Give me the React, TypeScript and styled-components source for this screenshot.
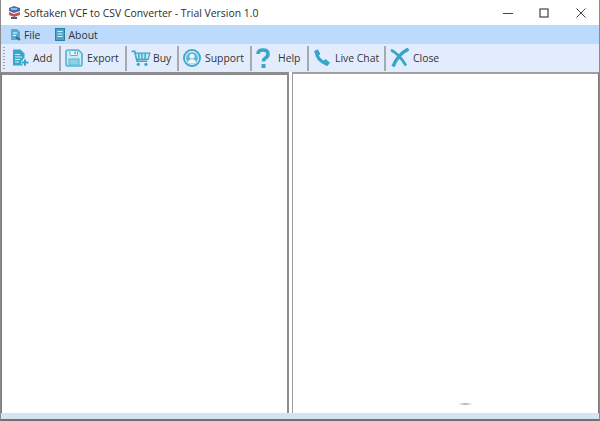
import React from 'react'
import styled, { createGlobalStyle } from 'styled-components'

const Global = createGlobalStyle`
  html, body { margin: 0; padding: 0; background: #fff; overflow: hidden; }
  * { box-sizing: border-box; }
`

const Win = styled.div`
  width: 600px;
  height: 421px;
  display: flex;
  flex-direction: column;
  font-family: "Open Sans", "Noto Sans", sans-serif;
  font-size: 10.4px;
  color: #333;
  border-left: 1px solid #8a8a8a;
  border-right: 1px solid #8a8a8a;
  border-bottom: 2px solid #707070;
  background: #fff;
`

const TitleBar = styled.div`
  height: 25px;
  display: flex;
  align-items: center;
  padding-left: 7px;
  gap: 3px;
  background: #fff;
`

const TitleText = styled.span`
  flex: 1;
  white-space: nowrap;
  color: #2c2c2c;
`

const WinBtns = styled.div`
  display: flex;
  align-items: center;
  margin-right: 12px;
  gap: 26px;
`

const MenuBar = styled.div`
  height: 19px;
  display: flex;
  align-items: center;
  padding-left: 9px;
  gap: 15px;
  background: #bcdafc;
`

const MenuItem = styled.div`
  display: flex;
  align-items: center;
  gap: 3px;
  color: #333;
`

const ToolBar = styled.div`
  height: 28px;
  display: flex;
  align-items: center;
  padding-left: 2px;
  background: #e3ecfd;
`

const Grip = styled.div`
  width: 2px;
  height: 22px;
  margin-right: 7px;
  background: repeating-linear-gradient(to bottom, #9aa4b4 0 1px, transparent 1px 3px);
`

const Tool = styled.div<{ $w: number; $gap: number }>`
  width: ${p => p.$w}px;
  height: 26px;
  display: flex;
  align-items: center;
  gap: ${p => p.$gap}px;
  white-space: nowrap;
`

const Sep = styled.div`
  width: 2px;
  height: 25px;
  margin-right: 4px;
  background: #a6a9ae;
`

const Panes = styled.div`
  flex: 1;
  display: flex;
  gap: 3px;
  min-height: 0;
`

const LeftPane = styled.div`
  width: 288px;
  background: #fff;
  border-top: 3px solid #8c8c8c;
  border-right: 2px solid #8c8c8c;
  border-left: 1px solid #7a7a7a;
`

const RightPane = styled.div`
  flex: 1;
  position: relative;
  background: #fff;
  border-top: 2px solid #a0a0a0;
  border-left: 1px solid #9a9a9a;
  border-right: 1px solid #7a7a7a;
`

// faint smudge left in the lower part of the right pane
const Smudge = styled.div`
  position: absolute;
  left: 165px;
  bottom: 8px;
  width: 15px;
  height: 2px;
  background: linear-gradient(to right, #fff, #b5b5b5 50%, #fff);
`

const Status = styled.div`
  height: 6px;
  background: #d5e2f2;
`

const teal = '#36a6c9'

const AppIcon = () => (
  <svg width="13" height="15" viewBox="0 0 13 15">
    <path d="M1 3 L6 1 L12 3 L12 6 L6 8 L1 6Z" fill="#3f6fb0" />
    <path d="M1 7 L6 9 L12 7 L12 10 L6 12 L1 10Z" fill="#c9524f" />
    <path d="M3 12 L9 12 L9 14 L3 14Z" fill="#4a5f80" />
    <path d="M3 4 L9 4" stroke="#fff" />
  </svg>
)

const FileMenuIcon = () => (
  <svg width="11" height="13" viewBox="0 0 11 13">
    <path d="M1 1H7L10 4V12H1Z" fill="#5aa9c9" />
    <path d="M3 5H7M3 7.5H6" stroke="#fff" />
    <path d="M6 9L10 12" stroke="#2c6f93" strokeWidth="2" />
  </svg>
)

const AboutMenuIcon = () => (
  <svg width="10" height="13" viewBox="0 0 10 13">
    <rect x="0.5" y="0.5" width="9" height="12" fill="#4ba3c6" stroke="#2f7fa3" />
    <path d="M2.5 3.5H7.5M2.5 6H7.5M2.5 8.5H7.5" stroke="#d8eef6" />
  </svg>
)

const AddIcon = () => (
  <svg width="17" height="18" viewBox="0 0 17 18">
    <path d="M1 0.500H8.500L12.500 4.500V16.500H1Z" fill={teal} />
    <path d="M3 5.500H8M3 8H10M3 10.500H8M3 13H7" stroke="#e3ecfd" strokeWidth="1.100" />
    <path d="M13 9.500V17.500M9.500 13.500H17" stroke="#e3ecfd" strokeWidth="4" />
    <path d="M13 10.500V16.800M10 13.500H16.500" stroke={teal} strokeWidth="2" />
  </svg>
)

const ExportIcon = () => (
  <svg width="18" height="18" viewBox="0 0 18 18">
    <path d="M3 1H13.500L17 4.500V15Q17 17 15 17H3Q1 17 1 15V3Q1 1 3 1Z" fill="#cfe9f5" stroke="#58b6d4" strokeWidth="1.700" />
    <rect x="5" y="1.500" width="7.500" height="5" rx="0.500" fill="#f6fbfe" stroke="#58b6d4" />
    <rect x="9.300" y="2.500" width="1.800" height="2.800" fill="#58b6d4" />
    <rect x="4" y="10" width="10" height="6" fill="#8fd0e6" stroke="#58b6d4" />
  </svg>
)

const BuyIcon = () => (
  <svg width="20" height="17" viewBox="0 0 22 19">
    <path d="M0.500 1.500H4L6.500 12.500H18" fill="none" stroke={teal} strokeWidth="1.800" />
    <path d="M4.500 3.500H21L19 10.500H6.200Z" fill="#bfe3f0" stroke={teal} strokeWidth="1.200" />
    <path d="M8.500 4V10.500M12 4V10.500M15.500 4V10.500" stroke={teal} strokeWidth="1.500" />
    <circle cx="8" cy="16" r="1.800" fill={teal} />
    <circle cx="16.500" cy="16" r="1.800" fill={teal} />
  </svg>
)

const SupportIcon = () => (
  <svg width="18" height="18" viewBox="0 0 20 20">
    <circle cx="10" cy="10" r="9" fill="#cde8f3" stroke={teal} strokeWidth="1.900" />
    <circle cx="10" cy="10" r="6.500" fill="#5cb7d5" />
    <circle cx="10" cy="8" r="2.800" fill="#f0f8fc" />
    <path d="M5.500 15Q6 11.500 10 11.500Q14 11.500 14.500 15Q10 17 5.500 15Z" fill="#f0f8fc" />
  </svg>
)

const HelpIcon = () => (
  <svg width="14" height="21" viewBox="0 0 14 21">
    <path d="M2 6Q2 2 7 2Q12 2 12 6Q12 8.500 9.500 10Q7.500 11.200 7.500 13.500" fill="none" stroke={teal} strokeWidth="3.600" />
    <rect x="5.500" y="16" width="4" height="4" fill={teal} />
  </svg>
)

const PhoneIcon = () => (
  <svg width="17" height="18" viewBox="0 0 17 18">
    <path d="M3.500 3Q3.500 10.500 13.500 15" fill="none" stroke={teal} strokeWidth="3.200" />
    <path d="M1.500 2.500L4.500 0.800L7 5L4 7Z" fill={teal} stroke={teal} strokeLinejoin="round" />
    <path d="M10.500 12.500L12.500 10.500L16.500 13.800L14 16.800Z" fill={teal} stroke={teal} strokeLinejoin="round" />
  </svg>
)

const CloseIcon = () => (
  <svg width="19" height="20" viewBox="0 0 19 20">
    <path d="M18.500 1Q8 6 3 18.500" fill="none" stroke={teal} strokeWidth="3.400" />
    <path d="M1 2Q9 6 16 17.500" fill="none" stroke={teal} strokeWidth="2.800" />
  </svg>
)

const tools = [
  { label: 'Add', w: 47, gap: 4, icon: <AddIcon /> },
  { label: 'Export', w: 60, gap: 4, icon: <ExportIcon /> },
  { label: 'Buy', w: 46, gap: 2, icon: <BuyIcon /> },
  { label: 'Support', w: 67, gap: 4, icon: <SupportIcon /> },
  { label: 'Help', w: 51, gap: 8, icon: <HelpIcon /> },
  { label: 'Live Chat', w: 71, gap: 5, icon: <PhoneIcon /> },
  { label: 'Close', w: 60, gap: 4, icon: <CloseIcon /> },
]

export default function App() {
  return (
    <>
      <Global />
      <Win>
        <TitleBar>
          <AppIcon />
          <TitleText>Softaken VCF to CSV Converter - Trial Version 1.0</TitleText>
          <WinBtns>
            <svg width="10" height="10" viewBox="0 0 10 10"><path d="M0 5.500H10" stroke="#444" /></svg>
            <svg width="10" height="10" viewBox="0 0 10 10"><rect x="1" y="1" width="8" height="8" fill="none" stroke="#444" strokeWidth="1.200" /></svg>
            <svg width="12" height="12" viewBox="0 0 12 12"><path d="M1.500 1.500L10.500 10.500M10.500 1.500L1.500 10.500" stroke="#444" /></svg>
          </WinBtns>
        </TitleBar>
        <MenuBar>
          <MenuItem><FileMenuIcon />File</MenuItem>
          <MenuItem><AboutMenuIcon />About</MenuItem>
        </MenuBar>
        <ToolBar>
          <Grip />
          {tools.map((t, i) => (
            <React.Fragment key={t.label}>
              <Tool $w={t.w} $gap={t.gap}>{t.icon}{t.label}</Tool>
              {i < tools.length - 1 && <Sep />}
            </React.Fragment>
          ))}
        </ToolBar>
        <Panes>
          <LeftPane />
          <RightPane><Smudge /></RightPane>
        </Panes>
        <Status />
      </Win>
    </>
  )
}
